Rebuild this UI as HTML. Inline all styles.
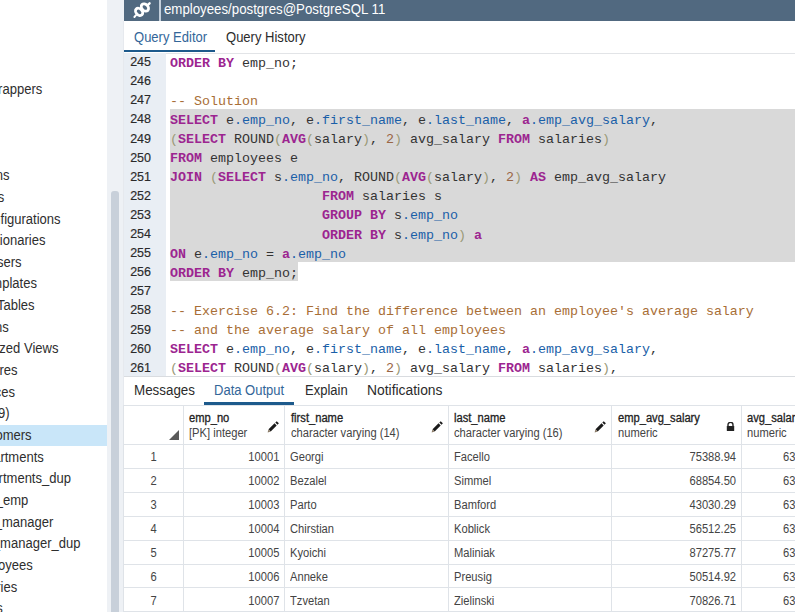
<!DOCTYPE html>
<html><head><meta charset="utf-8">
<style>
*{margin:0;padding:0;box-sizing:border-box}
html,body{width:795px;height:612px;overflow:hidden;background:#fff;font-family:"Liberation Sans",sans-serif}
.abs{position:absolute}
#tree{position:absolute;left:0;top:0;width:107px;height:612px;overflow:hidden;background:#fff}
.ti{position:absolute;white-space:nowrap;font-size:14px;line-height:16px;color:#2e2e2e;transform:scaleX(0.93);transform-origin:right center}
#hl{position:absolute;left:0;top:425px;width:107px;height:21px;background:#c9e6f9}
#sbt{position:absolute;left:107px;top:0;width:17px;height:612px;background:#eef1f5}
#sbth{position:absolute;left:111px;top:191px;width:8px;height:440px;background:#c8d0da;border-radius:3px}
#hdr{position:absolute;left:124px;top:0;width:671px;height:21px;background:#516980}
#sep{position:absolute;left:159px;top:0;width:2px;height:21px;background:#c4d0dc}
#title{position:absolute;left:164px;top:1px;font-size:14px;line-height:16px;color:#fff;white-space:nowrap;transform:scaleX(0.947);transform-origin:left center}
.tab{position:absolute;font-size:14px;line-height:16px;white-space:nowrap;color:#2b2b2b;transform:scaleX(0.93);transform-origin:left center}
#gut{position:absolute;left:124px;top:53px;width:42px;height:323px;background:#e9eef4}
.ln{position:absolute;left:121px;width:30px;text-align:right;font-size:12.5px;line-height:19px;height:19px;color:#2a2a2a;-webkit-text-stroke:0.15px #2a2a2a;padding-top:1px}
.cl{position:absolute;left:170px;white-space:pre;font-family:"Liberation Mono",monospace;font-size:13.333px;line-height:19px;height:19px;color:#333;padding-top:1.5px}
.k{color:#9c2590;font-weight:bold}
.v{color:#1a5fa8}
.c{color:#a86e36}
.b{color:#997}
.n{color:#964}
#sel1{position:absolute;left:170px;top:109.4px;width:625px;height:152.8px;background:#d9d9d9}
#sel2{position:absolute;left:170px;top:262.2px;width:128px;height:18.8px;background:#d9d9d9}
#codeb{position:absolute;left:124px;top:376px;width:671px;height:1px;background:#d9dce0}
#tabb{position:absolute;left:124px;top:53px;width:671px;height:1px;background:#e2e4e7}
#gridb{position:absolute;left:123px;top:405px;width:672px;height:207px;border-top:1px solid #dfe3e8;border-left:1px solid #dfe3e8}
#lb{position:absolute;left:123px;top:21px;width:1px;height:591px;background:#e6e9ee}
.vl{position:absolute;top:405px;width:1px;height:207px;background:#dfe3e8}
.hlin{position:absolute;left:124px;width:671px;height:1px;background:#dfe3e8}
.gh{position:absolute;font-size:12px;line-height:14px;white-space:nowrap;color:#222;transform:scaleX(0.93);transform-origin:left center}
.gr{position:absolute;left:0;width:795px;height:24px;font-size:12px;line-height:14px;color:#444}
.gr span{position:absolute;top:6px;white-space:nowrap;transform:scaleX(0.93);transform-origin:left center}
.gr span.R{transform-origin:right center}
.gr span.rn{left:124px;width:59px;text-align:center;transform-origin:center center}
.c1{right:516px}
.c2{left:290px}
.c3{left:454px}
.c4{right:59px}
.c5{left:783px}
</style></head><body>
<div id="tree">
<div id="hl"></div>
<div class="ti" style="top:80.60px;right:65.2px">Foreign Data Wrappers</div><div class="ti" style="top:167.20px;right:97.8px">Collations</div><div class="ti" style="top:188.85px;right:103.1px">Domains</div><div class="ti" style="top:210.50px;right:46.9px">FTS Configurations</div><div class="ti" style="top:232.15px;right:61.9px">FTS Dictionaries</div><div class="ti" style="top:253.80px;right:85.4px">FTS Parsers</div><div class="ti" style="top:275.45px;right:69.8px">FTS Templates</div><div class="ti" style="top:297.10px;right:72.2px">Foreign Tables</div><div class="ti" style="top:318.75px;right:98.5px">Functions</div><div class="ti" style="top:340.40px;right:48.4px">Materialized Views</div><div class="ti" style="top:362.05px;right:89.7px">Procedures</div><div class="ti" style="top:383.70px;right:91.6px">Sequences</div><div class="ti" style="top:405.35px;right:98.0px">Tables (9)</div><div class="ti" style="top:427.00px;right:75.1px">customers</div><div class="ti" style="top:448.65px;right:63.2px">departments</div><div class="ti" style="top:470.30px;right:36.4px">departments_dup</div><div class="ti" style="top:491.95px;right:78.4px">dept_emp</div><div class="ti" style="top:513.60px;right:53.9px">dept_manager</div><div class="ti" style="top:535.25px;right:27.0px">dept_manager_dup</div><div class="ti" style="top:556.90px;right:74.0px">employees</div><div class="ti" style="top:578.55px;right:90.2px">salaries</div><div class="ti" style="top:600.20px;right:104.3px">titles</div>
</div>
<div id="sbt"></div><div id="sbth"></div>
<div id="hdr"></div>
<div id="sep"></div>
<svg class="abs" style="left:124px;top:0px" width="35" height="21" viewBox="124 0 35 21">
<g fill="none" stroke="#fff" stroke-width="2.8" stroke-linecap="round">
<ellipse cx="139.1" cy="11.9" rx="4.1" ry="3.1" transform="rotate(45 139.1 11.9)"/>
<ellipse cx="144.9" cy="7.5" rx="4.1" ry="3.1" transform="rotate(45 144.9 7.5)"/>
<line x1="136" y1="15.2" x2="134.4" y2="17" stroke-width="2"/>
<line x1="147.9" y1="4.9" x2="149.6" y2="3.3" stroke-width="2.4"/>
</g></svg>
<div id="title">employees/postgres@PostgreSQL 11</div>
<div id="lb"></div>
<div class="tab" style="left:134px;top:29px;color:#336699">Query Editor</div>
<div class="tab" style="left:225.5px;top:29px">Query History</div>
<div class="abs" style="left:124px;top:49.6px;width:91px;height:2.6px;background:#1d5a8c"></div>
<div id="tabb"></div><div id="gut"></div>
<div id="sel1"></div><div id="sel2"></div>
<div class="ln" style="top:52.10px">245</div><div class="cl" style="top:52.10px"><span class="k">ORDER</span> <span class="k">BY</span> emp_no;</div><div class="ln" style="top:71.20px">246</div><div class="cl" style="top:71.20px"></div><div class="ln" style="top:90.30px">247</div><div class="cl" style="top:90.30px"><span class="c">-- Solution</span></div><div class="ln" style="top:109.40px">248</div><div class="cl" style="top:109.40px"><span class="k">SELECT</span> e<span class="v">.emp_no</span>, e<span class="v">.first_name</span>, e<span class="v">.last_name</span>, <span class="k">a</span><span class="v">.emp_avg_salary</span>,</div><div class="ln" style="top:128.50px">249</div><div class="cl" style="top:128.50px"><span class="b">(</span><span class="k">SELECT</span> ROUND<span class="b">(</span><span class="k">AVG</span><span class="b">(</span>salary<span class="b">)</span>, <span class="n">2</span><span class="b">)</span> avg_salary <span class="k">FROM</span> salaries<span class="b">)</span></div><div class="ln" style="top:147.60px">250</div><div class="cl" style="top:147.60px"><span class="k">FROM</span> employees e</div><div class="ln" style="top:166.70px">251</div><div class="cl" style="top:166.70px"><span class="k">JOIN</span> <span class="b">(</span><span class="k">SELECT</span> s<span class="v">.emp_no</span>, ROUND<span class="b">(</span><span class="k">AVG</span><span class="b">(</span>salary<span class="b">)</span>, <span class="n">2</span><span class="b">)</span> <span class="k">AS</span> emp_avg_salary</div><div class="ln" style="top:185.80px">252</div><div class="cl" style="top:185.80px">                   <span class="k">FROM</span> salaries s</div><div class="ln" style="top:204.90px">253</div><div class="cl" style="top:204.90px">                   <span class="k">GROUP</span> <span class="k">BY</span> s<span class="v">.emp_no</span></div><div class="ln" style="top:224.00px">254</div><div class="cl" style="top:224.00px">                   <span class="k">ORDER</span> <span class="k">BY</span> s<span class="v">.emp_no</span><span class="b">)</span> <span class="k">a</span></div><div class="ln" style="top:243.10px">255</div><div class="cl" style="top:243.10px"><span class="k">ON</span> e<span class="v">.emp_no</span> = <span class="k">a</span><span class="v">.emp_no</span></div><div class="ln" style="top:262.20px">256</div><div class="cl" style="top:262.20px"><span class="k">ORDER</span> <span class="k">BY</span> emp_no;</div><div class="ln" style="top:281.30px">257</div><div class="cl" style="top:281.30px"></div><div class="ln" style="top:300.40px">258</div><div class="cl" style="top:300.40px"><span class="c">-- Exercise 6.2: Find the difference between an employee&#x27;s average salary</span></div><div class="ln" style="top:319.50px">259</div><div class="cl" style="top:319.50px"><span class="c">-- and the average salary of all employees</span></div><div class="ln" style="top:338.60px">260</div><div class="cl" style="top:338.60px"><span class="k">SELECT</span> e<span class="v">.emp_no</span>, e<span class="v">.first_name</span>, e<span class="v">.last_name</span>, <span class="k">a</span><span class="v">.emp_avg_salary</span>,</div><div class="ln" style="top:357.70px">261</div><div class="cl" style="top:357.70px"><span class="b">(</span><span class="k">SELECT</span> ROUND<span class="b">(</span><span class="k">AVG</span><span class="b">(</span>salary<span class="b">)</span>, <span class="n">2</span><span class="b">)</span> avg_salary <span class="k">FROM</span> salaries<span class="b">)</span>,</div>
<div id="codeb"></div>
<div class="tab" style="left:134px;top:382px;transform:scaleX(0.955)">Messages</div>
<div class="tab" style="left:214px;top:382px;color:#336699">Data Output</div>
<div class="tab" style="left:304.5px;top:382px">Explain</div>
<div class="tab" style="left:367px;top:382px;transform:scaleX(0.99)">Notifications</div>
<div class="abs" style="left:204px;top:402px;width:90px;height:3px;background:#1d5a8c"></div>
<div id="gridb"></div>
<div class="vl" style="left:183px"></div>
<div class="vl" style="left:284px"></div>
<div class="vl" style="left:448px"></div>
<div class="vl" style="left:611px"></div>
<div class="vl" style="left:741px"></div>
<div class="hlin" style="top:444px"></div>
<div class="hlin" style="top:467.9px"></div>
<div class="hlin" style="top:491.8px"></div>
<div class="hlin" style="top:515.7px"></div>
<div class="hlin" style="top:539.6px"></div>
<div class="hlin" style="top:563.5px"></div>
<div class="hlin" style="top:587.4px"></div>
<div class="hlin" style="top:611.3px"></div>
<svg class="abs" style="left:169px;top:430px" width="10" height="10"><path d="M10 0 L10 10 L0 10 Z" fill="#5a5a5a"/></svg>
<div class="gh" style="left:189px;top:411px;-webkit-text-stroke:0.3px #222">emp_no</div>
<div class="gh" style="left:189px;top:426px;color:#444">[PK] integer</div>
<div class="gh" style="left:291px;top:411px;-webkit-text-stroke:0.3px #222">first_name</div>
<div class="gh" style="left:291px;top:426px;color:#444">character varying (14)</div>
<div class="gh" style="left:454px;top:411px;-webkit-text-stroke:0.3px #222">last_name</div>
<div class="gh" style="left:454px;top:426px;color:#444">character varying (16)</div>
<div class="gh" style="left:618px;top:411px;-webkit-text-stroke:0.3px #222">emp_avg_salary</div>
<div class="gh" style="left:618px;top:426px;color:#444">numeric</div>
<div class="gh" style="left:747px;top:411px;-webkit-text-stroke:0.3px #222">avg_salary</div>
<div class="gh" style="left:747px;top:426px;color:#444">numeric</div>
<svg class="abs" style="left:267px;top:420.5px" width="12" height="12" viewBox="0 0 12 12"><line x1="2.6" y1="9.4" x2="8.6" y2="3.4" stroke="#1a1a1a" stroke-width="3"/><line x1="9.4" y1="2.6" x2="10.8" y2="1.2" stroke="#1a1a1a" stroke-width="3"/><path d="M0.6 11.4 L1.5 8.3 L3.7 10.5 Z" fill="#8a7a66"/></svg><svg class="abs" style="left:430.5px;top:420.5px" width="12" height="12" viewBox="0 0 12 12"><line x1="2.6" y1="9.4" x2="8.6" y2="3.4" stroke="#1a1a1a" stroke-width="3"/><line x1="9.4" y1="2.6" x2="10.8" y2="1.2" stroke="#1a1a1a" stroke-width="3"/><path d="M0.6 11.4 L1.5 8.3 L3.7 10.5 Z" fill="#8a7a66"/></svg><svg class="abs" style="left:594px;top:420.5px" width="12" height="12" viewBox="0 0 12 12"><line x1="2.6" y1="9.4" x2="8.6" y2="3.4" stroke="#1a1a1a" stroke-width="3"/><line x1="9.4" y1="2.6" x2="10.8" y2="1.2" stroke="#1a1a1a" stroke-width="3"/><path d="M0.6 11.4 L1.5 8.3 L3.7 10.5 Z" fill="#8a7a66"/></svg>
<svg class="abs" style="left:726px;top:422px" width="9" height="9" viewBox="0 0 9 9"><path d="M2 4 V2.8 A2.5 2.5 0 0 1 7 2.8 V4" fill="none" stroke="#222" stroke-width="1.4"/><rect x="0.8" y="4" width="7.4" height="5" rx="0.6" fill="#222"/></svg>
<div class="gr" style="top:444.20px"><span class="rn">1</span><span class="c1 R">10001</span><span class="c2">Georgi</span><span class="c3">Facello</span><span class="c4 R">75388.94</span><span class="c5">63810.74</span></div><div class="gr" style="top:468.10px"><span class="rn">2</span><span class="c1 R">10002</span><span class="c2">Bezalel</span><span class="c3">Simmel</span><span class="c4 R">68854.50</span><span class="c5">63810.74</span></div><div class="gr" style="top:492.00px"><span class="rn">3</span><span class="c1 R">10003</span><span class="c2">Parto</span><span class="c3">Bamford</span><span class="c4 R">43030.29</span><span class="c5">63810.74</span></div><div class="gr" style="top:515.90px"><span class="rn">4</span><span class="c1 R">10004</span><span class="c2">Chirstian</span><span class="c3">Koblick</span><span class="c4 R">56512.25</span><span class="c5">63810.74</span></div><div class="gr" style="top:539.80px"><span class="rn">5</span><span class="c1 R">10005</span><span class="c2">Kyoichi</span><span class="c3">Maliniak</span><span class="c4 R">87275.77</span><span class="c5">63810.74</span></div><div class="gr" style="top:563.70px"><span class="rn">6</span><span class="c1 R">10006</span><span class="c2">Anneke</span><span class="c3">Preusig</span><span class="c4 R">50514.92</span><span class="c5">63810.74</span></div><div class="gr" style="top:587.60px"><span class="rn">7</span><span class="c1 R">10007</span><span class="c2">Tzvetan</span><span class="c3">Zielinski</span><span class="c4 R">70826.71</span><span class="c5">63810.74</span></div>
</body></html>
